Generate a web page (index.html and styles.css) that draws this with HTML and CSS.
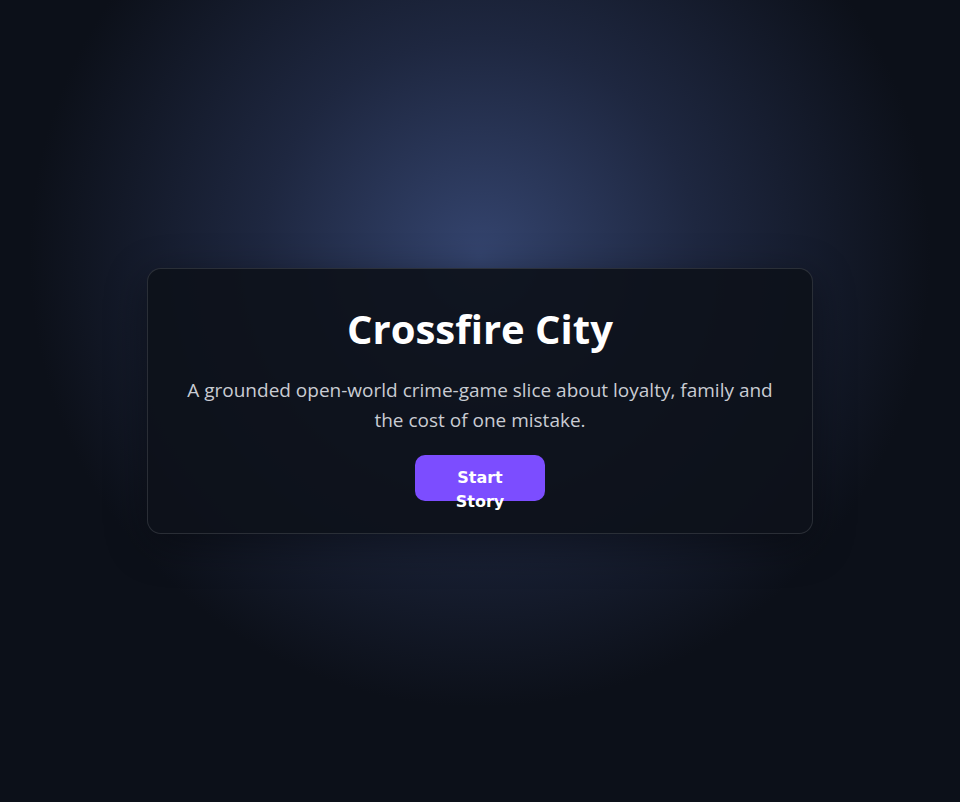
FILE: index.html
```html
<!DOCTYPE html>
<html lang="en">
<head>
    <meta charset="UTF-8">
    <title>Crossfire City</title>
    <link rel="stylesheet" href="styles.css">
</head>
<body>
    <div class="card">
        <h1>Crossfire City</h1>
        <p class="intro">A grounded open-world crime-game slice about loyalty, family and the cost of one mistake.</p>
        <button class="start-btn">Start Story</button>
    </div>
</body>
</html>
```

FILE: styles.css
```css
body {
    margin: 0;
    height: 100vh;
    background: radial-gradient(circle at 50% 32%, #34446e 0%, #1e2740 30%, #0c1019 62%);
    background-color: #0c1019;
    color: #fff;
    font-family: 'Open Sans', 'Noto Sans', sans-serif;
    display: flex;
    justify-content: center;
    align-items: center;
}

.card {
    width: 600px;
    padding: 32px;
    background: rgba(13, 17, 26, 0.92);
    border: 1px solid rgba(255, 255, 255, 0.12);
    border-radius: 14px;
    box-shadow: 0 10px 40px rgba(0, 0, 0, 0.4);
    text-align: center;
    display: flex;
    flex-direction: column;
    align-items: center;
}

h1 {
    margin: 0 0 18px;
    font-size: 40px;
    line-height: 56px;
    font-weight: 700;
}

.intro {
    margin: 0 0 20px;
    font-size: 19px;
    line-height: 30px;
    color: #c9ccd3;
}

.start-btn {
    height: 46px;
    padding: 11px 40px;
    width: 130px;
    border: none;
    border-radius: 10px;
    background: #7c4dff;
    color: #fff;
    font-family: 'DejaVu Sans', 'Liberation Sans', sans-serif;
    font-size: 16px;
    font-weight: 700;
    line-height: 24px;
    cursor: pointer;
}
```
